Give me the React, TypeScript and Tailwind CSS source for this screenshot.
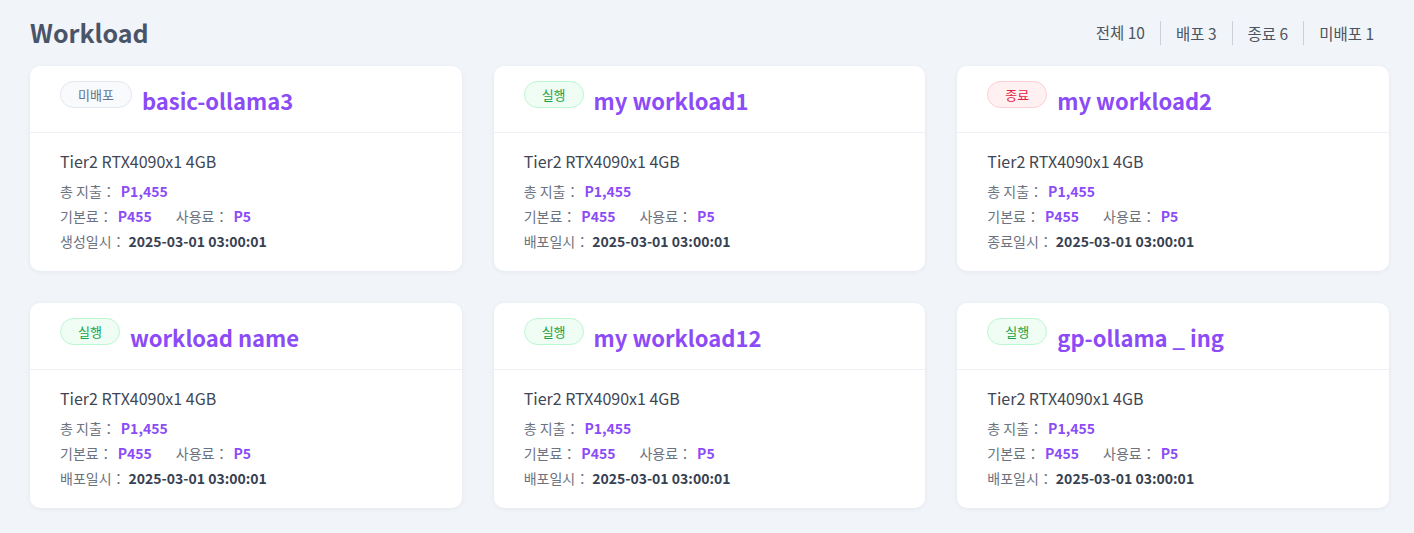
import React from "react";

type Status = "미배포" | "실행" | "종료";

const items: { status: Status; name: string; dateLabel: string }[] = [
  { status: "미배포", name: "basic-ollama3", dateLabel: "생성일시" },
  { status: "실행", name: "my workload1", dateLabel: "배포일시" },
  { status: "종료", name: "my workload2", dateLabel: "종료일시" },
  { status: "실행", name: "workload name", dateLabel: "배포일시" },
  { status: "실행", name: "my workload12", dateLabel: "배포일시" },
  { status: "실행", name: "gp-ollama _ ing", dateLabel: "배포일시" },
];

function Badge({ status }: { status: Status }) {
  if (status === "실행")
    return (
      <span className="h-[27px] px-[17px] rounded-full border border-[#bbf7d0] bg-[#f0fdf4] text-[#16a34a] text-[13px] leading-[25px] shrink-0">
        실행
      </span>
    );
  if (status === "종료")
    return (
      <span className="h-[27px] px-[17px] rounded-full border border-[#fecdd3] bg-[#fff1f2] text-[#e11d48] text-[13px] leading-[25px] shrink-0">
        종료
      </span>
    );
  return (
    <span className="h-[27px] px-[17px] rounded-full border border-[#e2e8f0] bg-[#f8fafc] text-[#64748b] text-[13px] leading-[25px] shrink-0">
      미배포
    </span>
  );
}

function Card({ status, name, dateLabel }: { status: Status; name: string; dateLabel: string }) {
  return (
    <div className="bg-white rounded-[10px] shadow-[0_1px_5px_rgba(15,23,42,0.06)]">
      <div className="flex items-start gap-[10px] px-[30px] pt-[15px] pb-[14px] border-b border-[#eef0f3]">
        <Badge status={status} />
        <span className="text-[22px] leading-[36px] font-bold text-[#8b4cf7] mt-[1px]">{name}</span>
      </div>
      <div className="px-[30px] pt-[16px] pb-[17px]">
        <div className="text-[16px] leading-[24px] text-[#3f4756]">Tier2 RTX4090x1 4GB</div>
        <div className="mt-[6px] text-[14px] leading-[25px] text-[#6b7280]">
          <div className="flex items-center">
            <span>총 지출：</span>
            <span className="ml-[5px] font-bold text-[#8b4cf7]">P1,455</span>
          </div>
          <div className="flex items-center">
            <span>기본료：</span>
            <span className="ml-[5px] font-bold text-[#8b4cf7]">P455</span>
            <span className="ml-[24px]">사용료：</span>
            <span className="ml-[5px] font-bold text-[#8b4cf7]">P5</span>
          </div>
          <div className="flex items-center">
            <span>{dateLabel}：</span>
            <span className="ml-[3px] font-bold text-[#374151]">2025-03-01 03:00:01</span>
          </div>
        </div>
      </div>
    </div>
  );
}

export default function App() {
  return (
    <div
      className="min-h-[533px] bg-[#f1f4f9] pl-[30px] pr-[25px] pb-[25px]"
      style={{ fontFamily: '"Noto Sans CJK KR", "Noto Sans", sans-serif' }}
    >
      <div className="h-[66px] flex items-center justify-between">
        <h1 className="text-[25px] font-bold text-[#4a5468] leading-none -mt-[2px]">Workload</h1>
        <div className="flex items-center text-[15.5px] text-[#4b5563] -mt-[1px]">
          <span className="px-[15px]">전체 10</span>
          <span className="px-[15px] border-l border-[#cbd0d8] leading-[24px]">배포 3</span>
          <span className="px-[15px] border-l border-[#cbd0d8] leading-[24px]">종료 6</span>
          <span className="pl-[15px] pr-[15px] border-l border-[#cbd0d8] leading-[24px]">미배포 1</span>
        </div>
      </div>
      <div className="grid grid-cols-3 gap-x-8 gap-y-8">
        {items.map((it, i) => (
          <Card key={i} {...it} />
        ))}
      </div>
    </div>
  );
}
